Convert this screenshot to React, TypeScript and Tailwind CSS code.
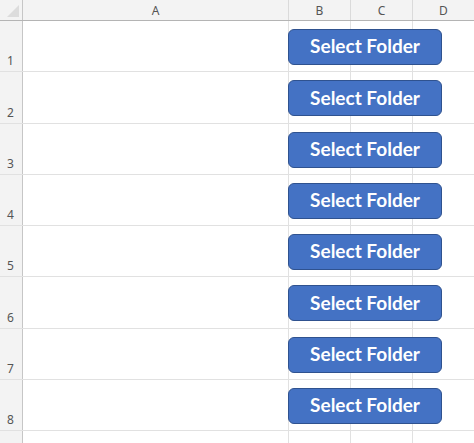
const columns = [
  { label: 'A', width: 'w-[266px]' },
  { label: 'B', width: 'w-[62px]' },
  { label: 'C', width: 'w-[62px]' },
  { label: 'D', width: 'w-[62px]' },
];

const rows = [1, 2, 3, 4, 5, 6, 7, 8, 9];

function SelectFolderButton() {
  return (
    <button
      className="absolute left-[288px] top-[8px] flex h-[36px] w-[154px] items-center justify-center rounded-[6px] border border-[#2f528f] bg-[#4472c4] pb-[1px] text-[19px] font-bold text-white"
      style={{ fontFamily: 'Lato, "Open Sans", sans-serif' }}
    >
      Select Folder
    </button>
  );
}

export default function App() {
  return (
    <div
      className="h-[443px] w-[474px] overflow-hidden bg-white text-[12px] text-[#555]"
      style={{ fontFamily: '"Noto Sans", "Liberation Sans", sans-serif' }}
    >
      {/* column headers */}
      <div className="flex h-[21px] border-b border-[#b4b4b4] bg-[#f3f3f3]">
        <div className="relative w-[23px] shrink-0 border-r border-[#c6c6c6]">
          <div className="absolute bottom-[3px] right-[3px] h-0 w-0 border-b-[12px] border-l-[12px] border-b-[#dcdcdc] border-l-transparent" />
        </div>
        {columns.map((c) => (
          <div
            key={c.label}
            className={`${c.width} flex shrink-0 items-center justify-center border-r border-[#dadada] pt-[1px]`}
          >
            {c.label}
          </div>
        ))}
      </div>

      {rows.map((r) => (
        <div key={r} className="relative flex h-[51.3px] border-b border-[#e1e1e1]">
          <div className="flex w-[23px] shrink-0 items-end border-r border-[#c6c6c6] bg-[#f3f3f3] pb-[1px] pl-[7px]">
            {r <= 8 ? r : ''}
          </div>
          {columns.map((c) => (
            <div key={c.label} className={`${c.width} shrink-0 border-r border-[#e1e1e1]`} />
          ))}
          {r <= 8 && <SelectFolderButton />}
        </div>
      ))}
    </div>
  );
}
